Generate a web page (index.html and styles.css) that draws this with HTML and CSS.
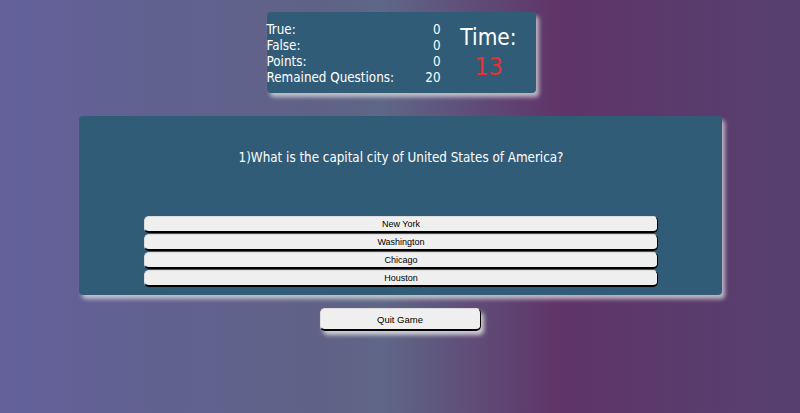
FILE: index.html
```html
<!DOCTYPE html>
<html>
<head>
<meta charset="utf-8">
<link rel="stylesheet" href="styles.css">
</head>
<body>
<div class="page">
  <div class="score">
    <div class="stats">
      <span class="label">True:</span><span class="val">0</span>
      <span class="label">False:</span><span class="val">0</span>
      <span class="label">Points:</span><span class="val">0</span>
      <span class="label">Remained Questions:</span><span class="val">20</span>
    </div>
    <div class="timer">
      <div class="time-label">Time:</div>
      <div class="time-val">13</div>
    </div>
  </div>
  <div class="quiz">
    <div class="question">1)What is the capital city of United States of America?</div>
    <div class="answers">
      <button class="answer">New York</button>
      <button class="answer">Washington</button>
      <button class="answer">Chicago</button>
      <button class="answer">Houston</button>
    </div>
  </div>
  <button class="quit">Quit Game</button>
</div>
</body>
</html>
```
FILE: styles.css
```css
html, body {
  margin: 0;
  height: 100%;
}
body {
  background: linear-gradient(to right, #63609a 0%, #5f6286 40%, #5f6688 48%, #603468 70%, #5a3a6c 85%, #574170 100%);
  font-family: "DejaVu Sans Condensed", "DejaVu Sans", sans-serif;
  color: #fff;
}
.page {
  display: flex;
  flex-direction: column;
  align-items: center;
  padding-top: 12px;
}
.score {
  width: 269px;
  height: 81px;
  box-sizing: border-box;
  background: #315c78;
  border-radius: 4px;
  box-shadow: 3px 4px 4px rgba(225, 225, 225, 0.75);
  display: flex;
  align-items: flex-start;
  padding-top: 10px;
  margin-left: 2px;
}
.stats {
  width: 174px;
  display: grid;
  grid-template-columns: 1fr auto;
  align-content: start;
  font-size: 13.3px;
  line-height: 16px;
}
.val {
  text-align: right;
}
.timer {
  flex: 1;
  text-align: center;
  padding-left: 1px;
  padding-top: 2px;
}
.time-label {
  font-size: 22.5px;
  line-height: 27px;
}
.time-val {
  font-size: 25px;
  line-height: 32px;
  color: #e8302f;
}
.quiz {
  margin-top: 23px;
  width: 643px;
  height: 179px;
  box-sizing: border-box;
  background: #315c78;
  border-radius: 4px;
  box-shadow: 3px 4px 4px rgba(225, 225, 225, 0.75);
  padding-top: 32px;
  margin-left: 1px;
}
.question {
  text-align: center;
  font-size: 13.3px;
  line-height: 20px;
  padding-left: 1px;
}
.answers {
  margin-top: 48px;
  display: flex;
  flex-direction: column;
  align-items: center;
  gap: 1px;
}
.answer, .quit {
  font-family: "Liberation Sans", Arial, sans-serif;
  color: #000;
  background: #efefef;
  border-style: solid;
  border-color: #dcdcdc #000 #000 #dcdcdc;
  border-width: 1px 1px 2px 1px;
  border-radius: 5px;
  padding: 0;
}
.answer {
  width: 514px;
  height: 17px;
  font-size: 9px;
  line-height: 14px;
  margin-left: 1px;
}
.quit {
  margin-top: 13px;
  width: 161px;
  height: 23px;
  font-size: 9.5px;
  box-shadow: 3px 4px 4px rgba(235, 235, 235, 0.8);
}
```
